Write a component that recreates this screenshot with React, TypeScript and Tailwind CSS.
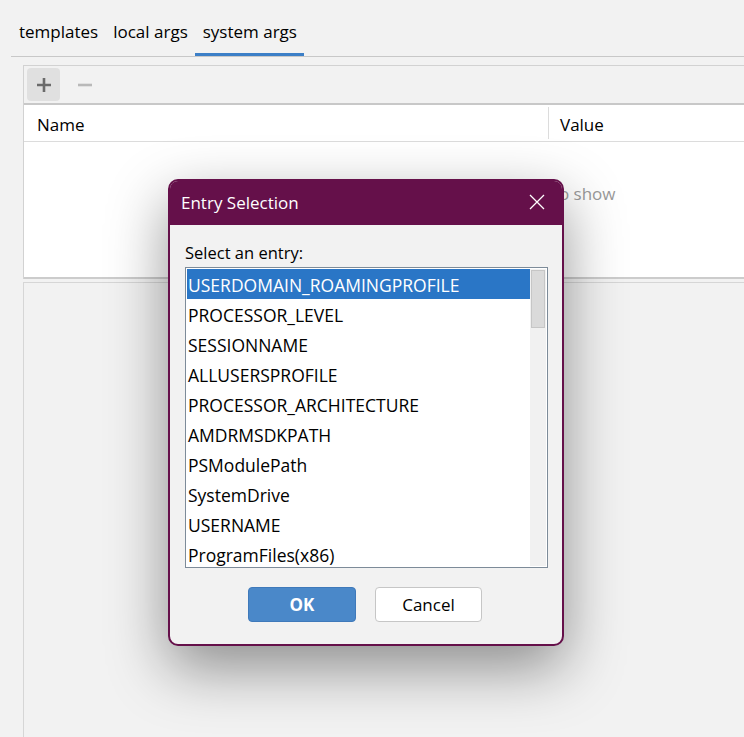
import React from "react";

const entries = [
  "USERDOMAIN_ROAMINGPROFILE",
  "PROCESSOR_LEVEL",
  "SESSIONNAME",
  "ALLUSERSPROFILE",
  "PROCESSOR_ARCHITECTURE",
  "AMDRMSDKPATH",
  "PSModulePath",
  "SystemDrive",
  "USERNAME",
  "ProgramFiles(x86)",
];

const tabs = ["templates", "local args", "system args"];

function EntryDialog() {
  return (
    <div className="absolute left-[168px] top-[179px] w-[396px] h-[467px] rounded-[10px] border-2 border-[#65104a] bg-[#f2f2f2] shadow-[0_22px_60px_rgba(0,0,0,0.42)] flex flex-col overflow-hidden">
      {/* title bar */}
      <div className="h-[44px] shrink-0 bg-[#65104a] flex items-center justify-between pl-[11px] pr-[16px]">
        <span className="text-[17px] text-white">Entry Selection</span>
        <svg width="18" height="18" viewBox="0 0 18 18" className="text-white -mt-[3px]">
          <path d="M2 2 L16 16 M16 2 L2 16" stroke="currentColor" strokeWidth="1.3" />
        </svg>
      </div>

      <div className="flex flex-col px-[15px] pt-[18px]">
        <span className="text-[16.5px] leading-[20px] text-black">Select an entry:</span>
        <div className="mt-[4px] h-[301px] w-[363px] border border-[#7d8b99] bg-white flex p-px">
          <div className="flex-1 flex flex-col">
            {entries.map((e, i) => (
              <div
                key={e}
                className={`h-[30px] shrink-0 flex items-center pl-[1px] pt-[2px] text-[17.5px] ${
                  i === 0 ? "bg-[#2a76c6] text-white" : "text-black"
                }`}
              >
                {e}
              </div>
            ))}
          </div>
          {/* scrollbar */}
          <div className="w-[16px] bg-[#f1f1f1] flex flex-col items-center pt-px">
            <div className="w-[14px] h-[58px] bg-[#dadada] border border-[#c6c6c6]" />
          </div>
        </div>

        <div className="mt-[19px] flex justify-center gap-[19px] pr-[2px]">
          <button className="w-[108px] h-[35px] rounded-[4px] bg-[#4a88c9] border border-[#3f79ba] text-white font-bold text-[17px]">
            OK
          </button>
          <button className="w-[107px] h-[35px] rounded-[4px] bg-white border border-[#c6c6c6] text-black text-[17px]">
            Cancel
          </button>
        </div>
      </div>
    </div>
  );
}

export default function App() {
  return (
    <div
      className="relative w-[744px] h-[737px] overflow-hidden bg-[#f2f2f2] text-black"
      style={{ fontFamily: '"Open Sans", "Noto Sans", sans-serif' }}
    >
      {/* tabs */}
      <div className="ml-[11px] h-[57px] border-b border-[#c8c8c8] flex items-end">
        {tabs.map((t, i) => (
          <div
            key={t}
            className={`h-[56px] flex items-center pl-[8px] pr-[7px] pt-[10px] text-[17px] ${
              i === 2 ? "border-b-[3px] border-[#3c7fc7]" : "border-b-[3px] border-transparent"
            }`}
          >
            {t}
          </div>
        ))}
      </div>

      {/* table panel */}
      <div className="ml-[23px] mt-[8px] border-l border-t border-[#d2d2d2]">
        <div className="h-[39px] flex items-center gap-[8px] pl-[3px] border-b-2 border-[#c8c8c8]">
          <div className="w-[33px] h-[33px] rounded-[4px] bg-[#e0e0e0] flex items-center justify-center">
            <svg width="16" height="16" viewBox="0 0 16 16">
              <path d="M8 1 V15 M1 8 H15" stroke="#6b6b6b" strokeWidth="2.6" />
            </svg>
          </div>
          <div className="w-[33px] h-[33px] flex items-center justify-center">
            <svg width="16" height="16" viewBox="0 0 16 16">
              <path d="M1 8 H15" stroke="#b9b9b9" strokeWidth="2.6" />
            </svg>
          </div>
        </div>
        <div className="bg-white">
          <div className="h-[37px] flex items-center border-b border-[#dcdcdc] text-[17px]">
            <div className="w-[525px] h-[32px] flex items-center pl-[13px] pt-[3px] border-r border-[#dcdcdc]">
              Name
            </div>
            <div className="pl-[11px] pt-[3px]">Value</div>
          </div>
          <div className="h-[135px] flex pt-[39px] pl-[461px]">
            <span className="text-[17px] text-[#9a9a9a] h-[24px]">Nothing to show</span>
          </div>
        </div>
        <div className="h-[2px] bg-[#cccccc]" />
      </div>
      <div className="ml-[23px] mt-[3px] h-[460px] border-l border-t border-[#d6d6d6]" />

      <EntryDialog />
    </div>
  );
}
